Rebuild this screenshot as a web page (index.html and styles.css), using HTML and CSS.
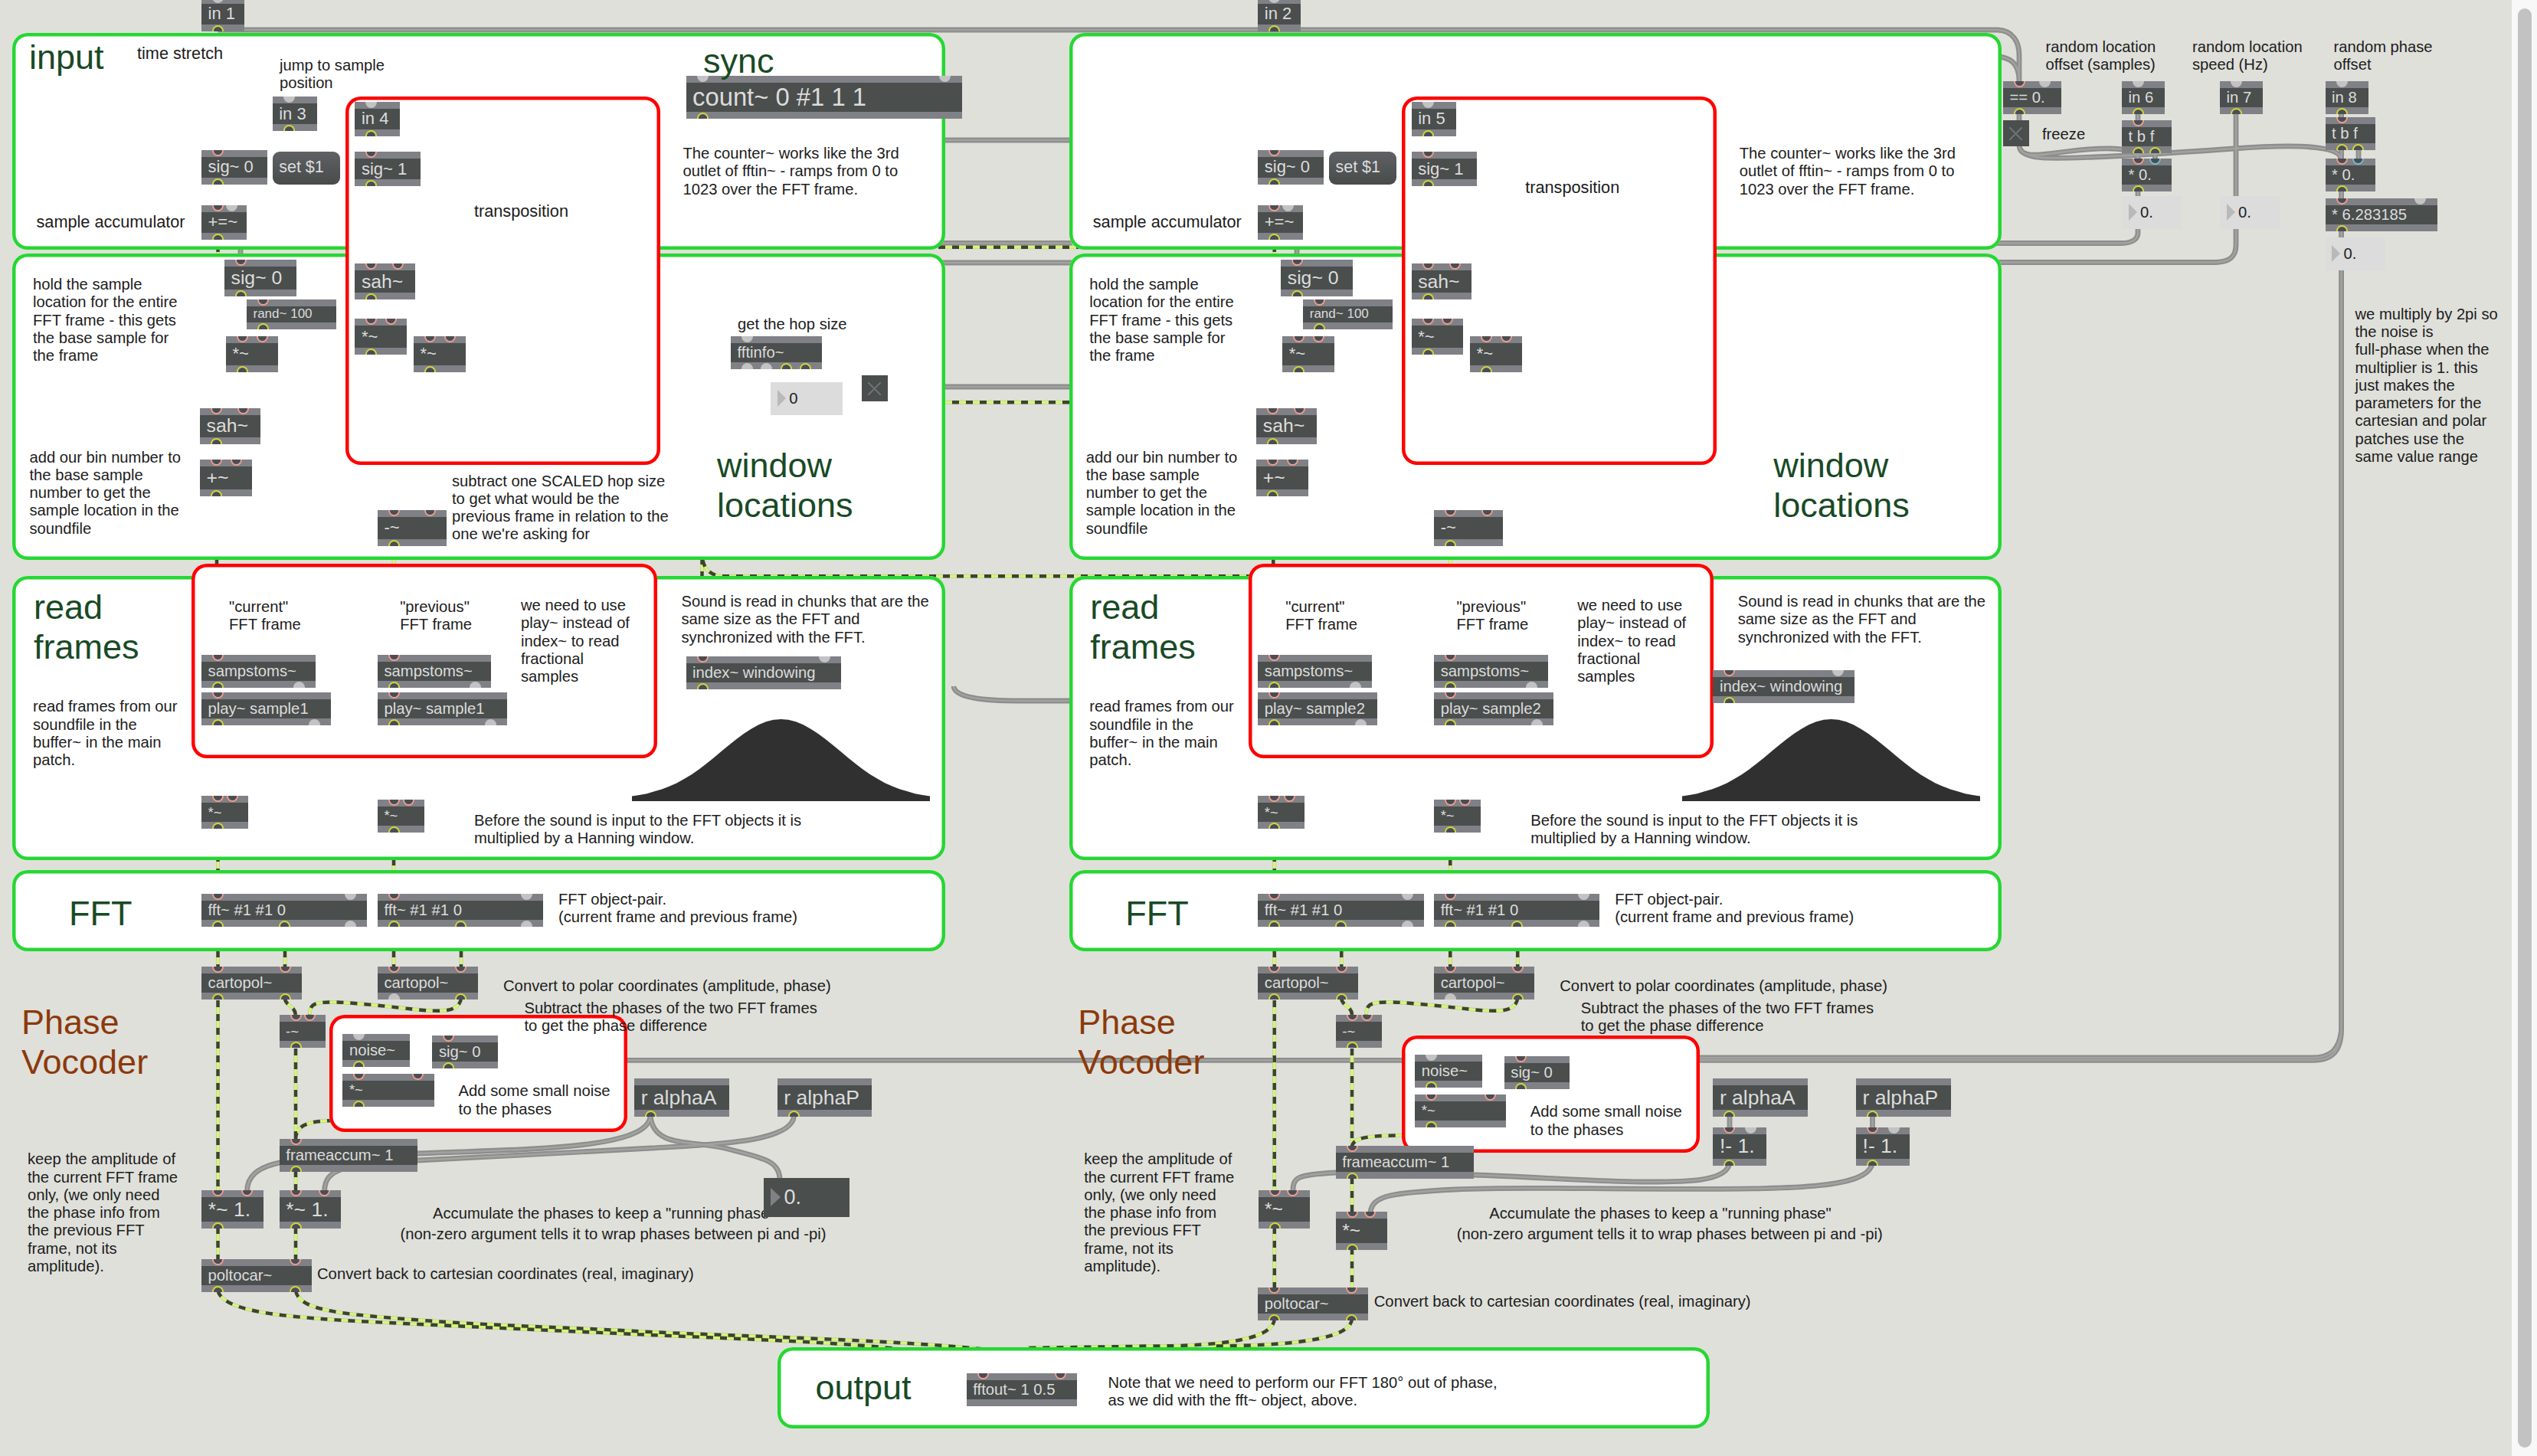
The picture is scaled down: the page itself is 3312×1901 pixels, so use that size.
FILE: index.html
```html
<!DOCTYPE html>
<html lang="en">
<head>
<meta charset="utf-8">
<title>Phase vocoder patch</title>
<link rel="stylesheet" href="styles.css">
</head>
<body>
<main class="patch">

<svg class="cords" width="3312" height="1901" viewBox="0 0 3312 1901">
  <defs>
    <g id="voice-cords">
      <path d="M284.5 320V345M514 700V740M283 620V745M284.5 1080V1170M514 1085V1170M284.5 1205V1264M372 1205V1264M514 1205V1264M602 1205V1264"/>
      <path d="M372 1303C372 1314 386 1312 386 1327M602 1303C600 1322 575 1320 560 1319.5S470 1309 438 1308.5S405 1312 404 1327M284.5 1306V1556"/>
    </g>
    <g id="grey">
      <path d="M284.5 39H2608C2628 40 2636 55 2636 72V108M2600 73C2625 74 2636 82 2636 106"/>
      <path d="M1230 183H1400M1220 317.5H1400M1230 343H1400M1230 505H1400"/>
      <path d="M1245 896C1246 911 1285 915 1330 915H1400"/>
      <path d="M2600 317.5H2770C2785 317.5 2791 311 2791 304V295M2600 342.5H2893C2912 342 2919 334 2919 320V295"/>
      <path d="M2919 145V258M2636 146V160M2791 146V160M2791 198V208M2813.4 198V208M2791 248V258M3056.6 146V156M3056.6 194V208M3079 194V208M3056.6 248V260M3056.6 299V312"/>
      <path d="M2636 190C2637 210 2680 207 2734 205S2834 200 2916 194S3056 190 3056 208M2636 190C2637 208 2665 202 2697 198S2791 188 2791 208"/>
      <path d="M3056.6 350V1345C3056 1372 3045 1384.3 3020 1384.3H810M3056.6 1345C3054 1370 3043 1381 3018 1381H2210"/>
      <path d="M314 320V340M1693 320V340"/>
      <path d="M849 1456C849 1500 700 1500 545 1506S322.5 1510 322.5 1556"/>
      <path d="M1036.5 1456C1036 1492 930 1494 850 1499S640 1510 545 1515S423.6 1525 423.6 1556"/>
      <path d="M849 1456C852 1500 905 1488 950 1500S1018 1515 1018 1540"/>
      <path d="M2258 1456V1474M2444.5 1456V1474"/>
      <path d="M2258 1518C2255 1545 2190 1543 2140 1543S1990 1536 1923 1534S1800 1528 1744 1531S1689 1538 1687.6 1557"/>
      <path d="M2444.5 1518C2440 1552 2340 1552 2210 1552.4S1980 1549 1900 1553S1790 1560 1789 1584"/>
    </g>
    <g id="signal">
      <use href="#voice-cords"/>
      <use href="#voice-cords" x="1379.25"/>
      <path d="M1225 322.7H1410M1225 525.3H1400M1636 752.3H940C925 750 918 740 917 728"/>
      <path d="M916.5 728V760"/>
      <path d="M386 1369V1490M386 1488C386 1470 400 1463.5 436 1463M386 1528V1556M284.5 1602V1646M386 1602V1646"/>
      <path d="M284.5 1685C290 1712 370 1718 420 1722S700 1736 829 1742S1100 1752 1190 1763M386 1685C390 1712 450 1716 547 1723.500S720 1732 829 1738S1150 1748 1290 1762"/>
      <path d="M1765 1369V1500M1765 1498C1765 1484 1790 1482.5 1836 1482.5M1765 1537V1584M1663.8 1602V1684M1765 1629V1684"/>
      <path d="M1663.8 1721C1664 1748 1600 1757.500 1500 1757.500L1340 1760M1765 1721C1765 1750 1680 1757 1580 1757.500"/>
    </g>
  </defs>
  <use href="#grey" class="cord"/>
  <use href="#grey" class="cord-core"/>
  <use href="#signal" class="signal"/>
  <use href="#signal" class="signal-core"/>
  <use href="#signal" class="dash"/>
</svg>

<!-- stage panels, voice A and voice B -->
<section class="panel" style="left:16px;top:42.500px;width:1217.500px;height:283.500px"></section>
<section class="panel" style="left:16px;top:330.500px;width:1217.500px;height:400.500px"></section>
<section class="panel" style="left:16px;top:751.500px;width:1217.500px;height:371.500px"></section>
<section class="panel" style="left:16px;top:1136px;width:1217.500px;height:106px"></section>
<section class="panel" style="left:1395.500px;top:42.500px;width:1217.500px;height:283.500px"></section>
<section class="panel" style="left:1395.500px;top:330.500px;width:1217.500px;height:400.500px"></section>
<section class="panel" style="left:1395.500px;top:751.500px;width:1217.500px;height:371.500px"></section>
<section class="panel" style="left:1395.500px;top:1136px;width:1217.500px;height:106px"></section>
<section class="panel" style="left:1014.500px;top:1759px;width:1217.500px;height:106px"></section>
<section class="panel edit" style="left:450.500px;top:125.700px;width:411px;height:481.500px"></section>
<section class="panel edit" style="left:250px;top:735.500px;width:607.500px;height:254.500px"></section>
<section class="panel edit" style="left:430px;top:1325px;width:389px;height:153px"></section>
<section class="panel edit" style="left:1829.700px;top:125.700px;width:411px;height:481.500px"></section>
<section class="panel edit" style="left:1629.500px;top:735.500px;width:607.500px;height:254.500px"></section>
<section class="panel edit" style="left:1829.700px;top:1352px;width:389px;height:153px"></section>

<!-- voice A -->
<div class="voice">
  <div class="obj s10" style="left:263px;top:-4.300px;width:56px"><i class="t gry"></i>in 1<i class="b sig"></i></div>
  <div class="obj s10" style="left:355.700px;top:126px;width:58.500px"><i class="t gry"></i>in 3<i class="b sig"></i></div>
  <div class="obj s10" style="left:463.400px;top:132.700px;width:58.500px"><i class="t gry"></i>in 4<i class="b sig"></i></div>
  <div class="obj s10" style="left:263px;top:195.500px;width:85.900px"><i class="t hot"></i>sig~ 0<i class="b sig"></i></div>
  <div class="msg" style="left:355.700px;top:198px">set $1</div>
  <div class="obj s10" style="left:463.400px;top:198px;width:85.500px"><i class="t hot"></i>sig~ 1<i class="b sig"></i></div>
  <div class="obj s10" style="left:263px;top:267.500px;width:59px"><i class="t hot"></i><i class="t gry" style="left:39.600px"></i>+=~<i class="b sig"></i></div>
  <div class="obj s11" style="left:293px;top:339.300px;width:94px"><i class="t hot"></i>sig~ 0<i class="b sig"></i></div>
  <div class="obj s8" style="left:322px;top:391.300px;width:116.600px"><i class="t hot"></i>rand~ 100<i class="b sig"></i></div>
  <div class="obj s11" style="left:463.400px;top:344px;width:78.700px"><i class="t hot"></i><i class="t hot" style="left:56.400px"></i>sah~<i class="b sig"></i></div>
  <div class="obj s11 op" style="left:463.400px;top:416px;width:67.600px"><i class="t hot"></i><i class="t hot" style="left:47px"></i>*~<i class="b sig"></i></div>
  <div class="obj s11 op" style="left:540px;top:438.700px;width:67.600px"><i class="t hot"></i><i class="t hot" style="left:47px"></i>*~<i class="b sig"></i></div>
  <div class="obj s11 op" style="left:295px;top:438.700px;width:67.600px"><i class="t hot"></i><i class="t hot" style="left:47px"></i>*~<i class="b sig"></i></div>
  <div class="obj s11" style="left:261px;top:532.700px;width:78.700px"><i class="t hot"></i><i class="t hot" style="left:56.400px"></i>sah~<i class="b sig"></i></div>
  <div class="obj s11" style="left:261px;top:600.300px;width:67.800px"><i class="t hot"></i><i class="t hot" style="left:47px"></i>+~<i class="b sig"></i></div>
  <div class="obj s11 op" style="left:492.900px;top:665.700px;width:90px"><i class="t hot"></i><i class="t hot" style="left:69px"></i>-~<i class="b sig"></i></div>
  <div class="obj s15" style="left:895.500px;top:99px;width:360px"><i class="t gry"></i><i class="t gry" style="left:337.600px"></i>count~ 0 #1 1 1<i class="b sig"></i></div>
  <div class="obj s9" style="left:954px;top:438.700px;width:119px"><i class="t gry"></i>fftinfo~<i class="b gry"></i><i class="b gry" style="left:46.700px"></i><i class="b sig" style="left:72.400px"></i><i class="b sig" style="left:97.600px"></i></div>
  <div class="num" style="left:1006.200px;top:499.300px;width:94px">0</div>
  <div class="toggle" style="left:1125px;top:490.300px"></div>
  <div class="obj s9" style="left:263px;top:854.700px;width:148.600px"><i class="t hot"></i>sampstoms~<i class="b sig"></i><i class="b gry" style="left:127.600px"></i></div>
  <div class="obj s9" style="left:263px;top:904px;width:168.800px"><i class="t hot"></i>play~ sample1<i class="b sig"></i><i class="b gry" style="left:147.300px"></i></div>
  <div class="obj s9" style="left:492.900px;top:854.700px;width:148.600px"><i class="t hot"></i>sampstoms~<i class="b sig"></i><i class="b gry" style="left:127.600px"></i></div>
  <div class="obj s9" style="left:492.900px;top:904px;width:168.800px"><i class="t hot"></i>play~ sample1<i class="b sig"></i><i class="b gry" style="left:147.300px"></i></div>
  <div class="obj s9" style="left:895.500px;top:857px;width:202.500px"><i class="t hot"></i><i class="t gry" style="left:181px"></i>index~ windowing<i class="b sig"></i></div>
  <svg class="window-shape" style="left:825.200px" viewBox="0 0 400 100" preserveAspectRatio="none"><path id="bell" d="M0 100V94L10 92.500L20 90.800L30 88.200L40 85.400L50 82L60 78L70 73L80 67.500L90 61.100L100 54.200L110 46.900L120 39.300L130 31.800L140 24.500L150 17.700L160 11.800L170 6.800L180 3.100L190 .8L200 0L210 .8L220 3.100L230 6.800L240 11.800L250 17.700L260 24.500L270 31.800L280 39.300L290 46.900L300 54.200L310 61.100L320 67.500L330 73L340 78L350 82L360 85.400L370 88.200L380 90.800L390 92.500L400 94V100Z"/></svg>
  <div class="obj s9 op" style="left:263px;top:1039px;width:61px"><i class="t hot"></i><i class="t hot" style="left:40.800px"></i>*~<i class="b sig"></i></div>
  <div class="obj s9 op" style="left:492.900px;top:1043.700px;width:61px"><i class="t hot"></i><i class="t hot" style="left:40.800px"></i>*~<i class="b sig"></i></div>
  <div class="obj s9" style="left:263px;top:1167.300px;width:216.300px"><i class="t hot"></i><i class="t gry" style="left:194.900px"></i>fft~ #1 #1 0<i class="b sig"></i><i class="b sig" style="left:108.200px"></i><i class="b gry" style="left:194.900px"></i></div>
  <div class="obj s9" style="left:492.900px;top:1167.300px;width:216.300px"><i class="t hot"></i><i class="t gry" style="left:194.900px"></i>fft~ #1 #1 0<i class="b sig"></i><i class="b sig" style="left:108.200px"></i><i class="b gry" style="left:194.900px"></i></div>
  <div class="obj s9" style="left:263px;top:1262px;width:130.900px"><i class="t hot"></i><i class="t hot" style="left:109px"></i>cartopol~<i class="b sig"></i><i class="b sig" style="left:109px"></i></div>
  <div class="obj s9" style="left:492.900px;top:1262px;width:130.900px"><i class="t hot"></i><i class="t hot" style="left:109px"></i>cartopol~<i class="b gry"></i><i class="b sig" style="left:109px"></i></div>
  <div class="obj s9 op" style="left:364.500px;top:1325px;width:60.600px"><i class="t hot"></i><i class="t hot" style="left:40.400px"></i>-~<i class="b sig"></i></div>
  <div class="obj s9" style="left:447.400px;top:1349.700px;width:88px"><i class="t gry"></i>noise~<i class="b sig"></i></div>
  <div class="obj s9" style="left:564.400px;top:1352px;width:85.400px"><i class="t hot"></i>sig~ 0<i class="b sig"></i></div>
  <div class="obj s9 op" style="left:447.400px;top:1401.700px;width:119.500px"><i class="t hot"></i><i class="t hot" style="left:98px"></i>*~<i class="b sig"></i></div>
  <div class="obj s12" style="left:828.200px;top:1408px;width:123.500px">r alphaA<i class="b sig"></i></div>
  <div class="obj s12" style="left:1014.800px;top:1408px;width:123.500px">r alphaP<i class="b sig"></i></div>
  <div class="obj s9" style="left:364.800px;top:1487px;width:180px"><i class="t hot"></i>frameaccum~ 1<i class="b sig"></i></div>
  <div class="obj s12" style="left:263.300px;top:1554.300px;width:80.600px"><i class="t hot"></i><i class="t hot" style="left:59px"></i>*~ 1.<i class="b sig"></i></div>
  <div class="obj s12" style="left:364.800px;top:1554.300px;width:80.600px"><i class="t hot"></i><i class="t hot" style="left:59px"></i>*~ 1.<i class="b sig"></i></div>
  <div class="obj s9" style="left:263px;top:1644.300px;width:143.600px"><i class="t hot"></i><i class="t hot" style="left:122.500px"></i>poltocar~<i class="b sig"></i><i class="b sig" style="left:122.500px"></i></div>

  <h2 style="left:37px;top:48.400px">input</h2>
  <h2 style="left:917px;top:52.700px">sync</h2>
  <h2 style="left:935px;top:581px">window<br>locations</h2>
  <h2 style="left:43px;top:766px">read<br>frames</h2>
  <h2 style="left:89px;top:1165.700px">FFT</h2>
  <h2 class="rust" style="left:27px;top:1308.200px">Phase<br>Vocoder</h2>
  <p class="big" style="left:178px;top:56.700px">time stretch</p>
  <p style="left:364px;top:73.100px">jump to sample<br>position</p>
  <p class="big" style="left:46.500px;top:276.700px">sample accumulator</p>
  <p class="big" style="left:618px;top:263.300px">transposition</p>
  <p style="left:890.500px;top:188.100px">The counter~ works like the 3rd<br>outlet of fftin~ - ramps from 0 to<br>1023 over the FFT frame.</p>
  <p style="left:42px;top:359.100px">hold the sample<br>location for the entire<br>FFT frame - this gets<br>the base sample for<br>the frame</p>
  <p style="left:962px;top:411.400px">get the hop size</p>
  <p style="left:37.500px;top:584.700px">add our bin number to<br>the base sample<br>number to get the<br>sample location in the<br>soundfile</p>
  <p style="left:589px;top:615.700px">subtract one SCALED hop size<br>to get what would be the<br>previous frame in relation to the<br>one we're asking for</p>
  <p style="left:298px;top:779.700px">"current"<br>FFT frame</p>
  <p style="left:521.200px;top:779.700px">"previous"<br>FFT frame</p>
  <p style="left:679px;top:778.100px">we need to use<br>play~ instead of<br>index~ to read<br>fractional<br>samples</p>
  <p style="left:888.500px;top:773.100px">Sound is read in chunks that are the<br>same size as the FFT and<br>synchronized with the FFT.</p>
  <p style="left:42px;top:910.400px">read frames from our<br>soundfile in the<br>buffer~ in the main<br>patch.</p>
  <p style="left:618px;top:1058.700px">Before the sound is input to the FFT objects it is<br>multiplied by a Hanning window.</p>
  <p style="left:728px;top:1162.100px">FFT object-pair.<br>(current frame and previous frame)</p>
  <p class="wide" style="left:656px;top:1274.700px">Convert to polar coordinates (amplitude, phase)</p>
  <p style="left:683.500px;top:1304.100px">Subtract the phases of the two FFT frames<br>to get the phase difference</p>
  <p class="wide" style="left:597.500px;top:1412.400px">Add some small noise<br>to the phases</p>
  <p style="left:35px;top:1501.400px">keep the amplitude of<br>the current FFT frame<br>only, (we only need<br>the phase info from<br>the previous FFT<br>frame, not its<br>amplitude).</p>
  <p style="left:564px;top:1572.100px">Accumulate the phases to keep a "running phase</p>
  <p class="wide" style="left:521.500px;top:1598.700px">(non-zero argument tells it to wrap phases between pi and -pi)</p>
  <p class="wide" style="left:413px;top:1650.700px">Convert back to cartesian coordinates (real, imaginary)</p>
  <div class="num dark" style="left:996.500px;top:1538.300px;width:112.700px">0.</div>
</div>

<!-- voice B -->
<div class="voice second">
  <div class="obj s10" style="left:263px;top:-4.300px;width:56px"><i class="t gry"></i>in 2<i class="b sig"></i></div>
  <div class="obj s10" style="left:463.400px;top:132.700px;width:58.500px"><i class="t gry"></i>in 5<i class="b sig"></i></div>
  <div class="obj s10" style="left:263px;top:195.500px;width:85.900px"><i class="t hot"></i>sig~ 0<i class="b sig"></i></div>
  <div class="msg" style="left:355.700px;top:198px">set $1</div>
  <div class="obj s10" style="left:463.400px;top:198px;width:85.500px"><i class="t hot"></i>sig~ 1<i class="b sig"></i></div>
  <div class="obj s10" style="left:263px;top:267.500px;width:59px"><i class="t hot"></i><i class="t gry" style="left:39.600px"></i>+=~<i class="b sig"></i></div>
  <div class="obj s11" style="left:293px;top:339.300px;width:94px"><i class="t hot"></i>sig~ 0<i class="b sig"></i></div>
  <div class="obj s8" style="left:322px;top:391.300px;width:116.600px"><i class="t hot"></i>rand~ 100<i class="b sig"></i></div>
  <div class="obj s11" style="left:463.400px;top:344px;width:78.700px"><i class="t hot"></i><i class="t hot" style="left:56.400px"></i>sah~<i class="b sig"></i></div>
  <div class="obj s11 op" style="left:463.400px;top:416px;width:67.600px"><i class="t hot"></i><i class="t hot" style="left:47px"></i>*~<i class="b sig"></i></div>
  <div class="obj s11 op" style="left:540px;top:438.700px;width:67.600px"><i class="t hot"></i><i class="t hot" style="left:47px"></i>*~<i class="b sig"></i></div>
  <div class="obj s11 op" style="left:295px;top:438.700px;width:67.600px"><i class="t hot"></i><i class="t hot" style="left:47px"></i>*~<i class="b sig"></i></div>
  <div class="obj s11" style="left:261px;top:532.700px;width:78.700px"><i class="t hot"></i><i class="t hot" style="left:56.400px"></i>sah~<i class="b sig"></i></div>
  <div class="obj s11" style="left:261px;top:600.300px;width:67.800px"><i class="t hot"></i><i class="t hot" style="left:47px"></i>+~<i class="b sig"></i></div>
  <div class="obj s11 op" style="left:492.900px;top:665.700px;width:90px"><i class="t hot"></i><i class="t hot" style="left:69px"></i>-~<i class="b sig"></i></div>
  <div class="obj s9" style="left:263px;top:854.700px;width:148.600px"><i class="t hot"></i>sampstoms~<i class="b sig"></i><i class="b gry" style="left:127.600px"></i></div>
  <div class="obj s9" style="left:263px;top:904px;width:155.500px"><i class="t hot"></i>play~ sample2<i class="b sig"></i><i class="b gry" style="left:134px"></i></div>
  <div class="obj s9" style="left:492.900px;top:854.700px;width:148.600px"><i class="t hot"></i>sampstoms~<i class="b sig"></i><i class="b gry" style="left:127.600px"></i></div>
  <div class="obj s9" style="left:492.900px;top:904px;width:155.500px"><i class="t hot"></i>play~ sample2<i class="b sig"></i><i class="b gry" style="left:134px"></i></div>
  <div class="obj s9" style="left:857.200px;top:875px;width:184.300px"><i class="t hot"></i><i class="t gry" style="left:163.500px"></i>index~ windowing<i class="b sig"></i></div>
  <svg class="window-shape" style="left:816.500px" viewBox="0 0 400 100" preserveAspectRatio="none"><use href="#bell"/></svg>
  <div class="obj s9 op" style="left:263px;top:1039px;width:61px"><i class="t hot"></i><i class="t hot" style="left:40.800px"></i>*~<i class="b sig"></i></div>
  <div class="obj s9 op" style="left:492.900px;top:1043.700px;width:61px"><i class="t hot"></i><i class="t hot" style="left:40.800px"></i>*~<i class="b sig"></i></div>
  <div class="obj s9" style="left:263px;top:1167.300px;width:216.300px"><i class="t hot"></i><i class="t gry" style="left:194.900px"></i>fft~ #1 #1 0<i class="b sig"></i><i class="b sig" style="left:108.200px"></i><i class="b gry" style="left:194.900px"></i></div>
  <div class="obj s9" style="left:492.900px;top:1167.300px;width:216.300px"><i class="t hot"></i><i class="t gry" style="left:194.900px"></i>fft~ #1 #1 0<i class="b sig"></i><i class="b sig" style="left:108.200px"></i><i class="b gry" style="left:194.900px"></i></div>
  <div class="obj s9" style="left:263px;top:1262px;width:130.900px"><i class="t hot"></i><i class="t hot" style="left:109px"></i>cartopol~<i class="b sig"></i><i class="b sig" style="left:109px"></i></div>
  <div class="obj s9" style="left:492.900px;top:1262px;width:130.900px"><i class="t hot"></i><i class="t hot" style="left:109px"></i>cartopol~<i class="b gry"></i><i class="b sig" style="left:109px"></i></div>
  <div class="obj s9 op" style="left:364.500px;top:1325px;width:60.600px"><i class="t hot"></i><i class="t hot" style="left:40.400px"></i>-~<i class="b sig"></i></div>
  <div class="obj s9" style="left:468.100px;top:1376.600px;width:88px"><i class="t gry"></i>noise~<i class="b sig"></i></div>
  <div class="obj s9" style="left:584.500px;top:1379px;width:85.400px"><i class="t hot"></i>sig~ 0<i class="b sig"></i></div>
  <div class="obj s9 op" style="left:468.100px;top:1428.500px;width:119px"><i class="t hot"></i><i class="t hot" style="left:98px"></i>*~<i class="b sig"></i></div>
  <div class="obj s12" style="left:857.200px;top:1408px;width:123.500px">r alphaA<i class="b sig"></i></div>
  <div class="obj s12" style="left:1043.800px;top:1408px;width:123.500px">r alphaP<i class="b sig"></i></div>
  <div class="obj s12" style="left:857.200px;top:1471.500px;width:69.600px"><i class="t hot"></i><i class="t gry" style="left:49px"></i>!- 1.<i class="b sig"></i></div>
  <div class="obj s12" style="left:1043.800px;top:1471.500px;width:69.600px"><i class="t hot"></i><i class="t gry" style="left:49px"></i>!- 1.<i class="b sig"></i></div>
  <div class="obj s9" style="left:364.500px;top:1496px;width:180px"><i class="t hot"></i>frameaccum~ 1<i class="b sig"></i></div>
  <div class="obj s12 op" style="left:263.300px;top:1554.300px;width:67.200px"><i class="t hot"></i><i class="t hot" style="left:45px"></i>*~<i class="b sig"></i></div>
  <div class="obj s12 op" style="left:364.500px;top:1581.500px;width:67.200px"><i class="t hot"></i><i class="t hot" style="left:45px"></i>*~<i class="b sig"></i></div>
  <div class="obj s9" style="left:263px;top:1680.500px;width:143.600px"><i class="t hot"></i><i class="t hot" style="left:122.500px"></i>poltocar~<i class="b sig"></i><i class="b sig" style="left:122.500px"></i></div>

  <h2 style="left:935px;top:581px">window<br>locations</h2>
  <h2 style="left:43px;top:766px">read<br>frames</h2>
  <h2 style="left:89px;top:1165.700px">FFT</h2>
  <h2 class="rust" style="left:27px;top:1308.200px">Phase<br>Vocoder</h2>
  <p class="big" style="left:46.500px;top:276.700px">sample accumulator</p>
  <p class="big" style="left:611px;top:232px">transposition</p>
  <p style="left:890.500px;top:188.100px">The counter~ works like the 3rd<br>outlet of fftin~ - ramps from 0 to<br>1023 over the FFT frame.</p>
  <p style="left:42px;top:359.100px">hold the sample<br>location for the entire<br>FFT frame - this gets<br>the base sample for<br>the frame</p>
  <p style="left:37.500px;top:584.700px">add our bin number to<br>the base sample<br>number to get the<br>sample location in the<br>soundfile</p>
  <p style="left:298px;top:779.700px">"current"<br>FFT frame</p>
  <p style="left:521.200px;top:779.700px">"previous"<br>FFT frame</p>
  <p style="left:679px;top:778.100px">we need to use<br>play~ instead of<br>index~ to read<br>fractional<br>samples</p>
  <p style="left:888.500px;top:773.100px">Sound is read in chunks that are the<br>same size as the FFT and<br>synchronized with the FFT.</p>
  <p style="left:42px;top:910.400px">read frames from our<br>soundfile in the<br>buffer~ in the main<br>patch.</p>
  <p style="left:618px;top:1058.700px">Before the sound is input to the FFT objects it is<br>multiplied by a Hanning window.</p>
  <p style="left:728px;top:1162.100px">FFT object-pair.<br>(current frame and previous frame)</p>
  <p class="wide" style="left:656px;top:1274.700px">Convert to polar coordinates (amplitude, phase)</p>
  <p style="left:683.500px;top:1304.100px">Subtract the phases of the two FFT frames<br>to get the phase difference</p>
  <p class="wide" style="left:617.500px;top:1439.400px">Add some small noise<br>to the phases</p>
  <p style="left:35px;top:1501.400px">keep the amplitude of<br>the current FFT frame<br>only, (we only need<br>the phase info from<br>the previous FFT<br>frame, not its<br>amplitude).</p>
  <p style="left:564px;top:1572.100px">Accumulate the phases to keep a "running phase"</p>
  <p class="wide" style="left:521.500px;top:1598.700px">(non-zero argument tells it to wrap phases between pi and -pi)</p>
  <p class="wide" style="left:413.500px;top:1687.200px">Convert back to cartesian coordinates (real, imaginary)</p>
</div>

<!-- output -->
<h2 style="left:1063.500px;top:1785.100px">output</h2>
<div class="obj s9" style="left:1261.800px;top:1793.300px;width:144.200px"><i class="t hot"></i><i class="t hot" style="left:122.500px"></i>fftout~ 1 0.5</div>
<p style="left:1445.500px;top:1792.700px">Note that we need to perform our FFT 180° out of phase,<br>as we did with the fft~ object, above.</p>

<!-- shared controls -->
<div class="obj s9" style="left:2615px;top:105.500px;width:76px"><i class="t hot"></i><i class="t gry" style="left:54.600px"></i>== 0.<i class="b sig"></i></div>
<div class="toggle" style="left:2615px;top:157.400px"></div>
<p style="left:2665px;top:163.300px">freeze</p>
<p style="left:2669.500px;top:49px">random location<br>offset (samples)</p>
<p style="left:2861px;top:49px">random location<br>speed (Hz)</p>
<p style="left:3045.500px;top:49px">random phase<br>offset</p>
<div class="obj s9" style="left:2770px;top:105.500px;width:56px"><i class="t gry"></i>in 6<i class="b sig"></i></div>
<div class="obj s9" style="left:2898px;top:105.500px;width:56px"><i class="t gry"></i>in 7<i class="b sig"></i></div>
<div class="obj s9" style="left:3035.600px;top:105.500px;width:56px"><i class="t gry"></i>in 8<i class="b sig"></i></div>
<div class="obj s9" style="left:2770px;top:157.400px;width:65px"><i class="t hot"></i>t b f<i class="b sig"></i><i class="b sig" style="left:43.400px"></i></div>
<div class="obj s9" style="left:2770px;top:206.800px;width:65px"><i class="t hot"></i><i class="t cold" style="left:43.400px"></i>* 0.<i class="b sig"></i></div>
<div class="num" style="left:2770px;top:256.200px;width:78.400px">0.</div>
<div class="num" style="left:2898px;top:256.200px;width:78.400px">0.</div>
<div class="obj s9" style="left:3035.600px;top:153px;width:65px"><i class="t hot"></i>t b f<i class="b sig"></i><i class="b sig" style="left:43.400px"></i></div>
<div class="obj s9" style="left:3035.600px;top:206.800px;width:65px"><i class="t hot"></i><i class="t cold" style="left:43.400px"></i>* 0.<i class="b sig"></i></div>
<div class="obj s9" style="left:3035.600px;top:258.600px;width:146px"><i class="t hot"></i><i class="t gry" style="left:124px"></i>* 6.283185<i class="b sig"></i></div>
<div class="num" style="left:3035.600px;top:310.400px;width:78.400px">0.</div>
<p style="left:3073.500px;top:397.800px">we multiply by 2pi so<br>the noise is<br>full-phase when the<br>multiplier is 1. this<br>just makes the<br>parameters for the<br>cartesian and polar<br>patches use the<br>same value range</p>

<div class="scrollbar"><span></span></div>
</main>
</body>
</html>
```
FILE: styles.css
```css
* { box-sizing: border-box; }
body { margin: 0; background: #dfe0da; font-family: "Liberation Sans", Arial, sans-serif; }
.patch { position: relative; width: 3312px; height: 1901px; overflow: hidden; }
.voice { position: absolute; left: 0; top: 0; }
.voice.second { left: 1379.25px; }

/* patch cords */
.cords { position: absolute; left: 0; top: 0; fill: none; }
.cord { stroke: #8d8d8b; stroke-width: 6.8px; }
.cord-core { stroke: #a2a2a0; stroke-width: 2.6px; }
.signal { stroke: #c3cba4; stroke-width: 5px; }
.signal-core { stroke: #d4f777; stroke-width: 3.4px; }
.dash { stroke: #3c432e; stroke-width: 4.4px; stroke-dasharray: 9px 9px; }

/* panels */
.panel { position: absolute; background: #fff; border-radius: 20px; box-shadow: inset 0 0 0 4.5px #26d733; }
.panel.edit { box-shadow: inset 0 0 0 4.5px #ff0000; }

/* object boxes */
.obj { position: absolute; display: flex; align-items: center; padding-left: 8.5px; white-space: pre; color: #dcdcdc;
  background: linear-gradient(#808186 0 9px, #4a4e4d 9px calc(100% - 9px), #808186 calc(100% - 9px)); }
.s8 { height: 38.3px; font-size: 17px; }
.s9 { height: 43px; font-size: 20.25px; }
.s10 { height: 45px; font-size: 22px; }
.s11 { height: 47.3px; font-size: 24.75px; }
.s12 { height: 50px; font-size: 26.5px; }
.s15 { height: 56px; font-size: 32.8px; }
.s9.op { font-size: 18.5px; }
.s11.op { font-size: 22px; }
.s12.op { font-size: 24.5px; }
.obj i { position: absolute; left: 21.5px; width: 15px; height: 8px; margin-left: -7.5px; background: #494e56; border: 2px solid; }
.obj .t { top: 0; border-top: 0; border-radius: 0 0 8px 8px; }
.obj .b { bottom: 0; border-bottom: 0; border-radius: 8px 8px 0 0; }
.obj .hot { border-color: #f09c8c; }
.obj .sig { border-color: #d0d43c; }
.obj .cold { border-color: #74bccb; }
.obj .gry { border-color: #c3c3c4; background: #c3c3c4; }

.msg { position: absolute; width: 88px; height: 42.7px; padding-left: 8.5px; border-radius: 9px; font-size: 21.5px; line-height: 40px;
  color: #dcdcdc; background: linear-gradient(#5f6164, #474b4a); }

.num { position: absolute; height: 42.7px; padding-left: 24px; font-size: 20.25px; line-height: 42px; color: #222; background: #dcdcdc; }
.num::before { content: ""; position: absolute; left: 8.5px; top: 10px; border: solid transparent; border-width: 11.5px 0 11.5px 11.5px; border-left-color: #b9b9b9; }
.num.dark { height: 50.3px; padding-left: 27px; font-size: 27px; line-height: 50px; color: #dcdcdc; background: #4a4e4d; }
.num.dark::before { top: 12.5px; left: 9px; border-width: 12.5px 0 12.5px 13px; border-left-color: #808186; }

.toggle { position: absolute; width: 33.8px; height: 33.8px; background:
  linear-gradient(45deg, transparent 46%, #6b7176 46% 54%, transparent 54%) center / 17px 17px no-repeat,
  linear-gradient(-45deg, transparent 46%, #6b7176 46% 54%, transparent 54%) center / 17px 17px no-repeat, #4a4e4d; }

.window-shape { position: absolute; top: 939px; width: 389px; height: 107px; fill: #303030; }

/* comments */
h2, p { position: absolute; margin: 1px 0 0 1px; white-space: pre; font-weight: 400; }
h2 { font-size: 45px; line-height: 51.75px; color: #184a25; }
h2.rust { color: #8c390b; }
p { font-size: 20.2px; line-height: 23.25px; color: #1c1c1c; }
p.wide { font-size: 20.25px; }
p.big { font-size: 21.7px; line-height: 25px; margin-top: 0; }

.scrollbar { position: absolute; right: 0; top: 0; width: 33px; height: 1901px; background: #f8f8f8; }
.scrollbar span { position: absolute; left: 8px; top: 11px; width: 18px; height: 1879px; border-radius: 9px; background: #c2c2c2; }
```
